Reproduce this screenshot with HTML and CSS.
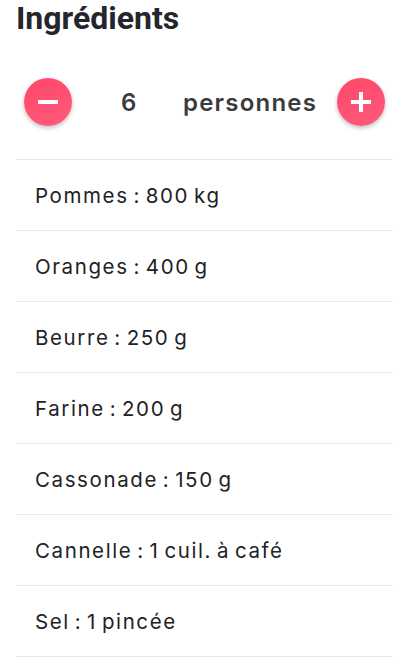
FILE: index.html
```html
<!DOCTYPE html>
<html lang="fr">
<head>
<meta charset="utf-8">
<link rel="stylesheet" href="styles.css">
</head>
<body>
<div class="page">
  <h1 class="title">Ingrédients</h1>
  <div class="counter">
    <button class="round" aria-label="moins">
      <svg width="48" height="48" viewBox="0 0 48 48"><rect x="14" y="22" width="20" height="4" fill="#fff"/></svg>
    </button>
    <span class="num">6</span>
    <span class="unit">personnes</span>
    <button class="round" aria-label="plus">
      <svg width="48" height="48" viewBox="0 0 48 48"><rect x="14" y="22" width="20" height="4" fill="#fff"/><rect x="22" y="14" width="4" height="20" fill="#fff"/></svg>
    </button>
  </div>
  <ul class="list">
    <li>Pommes : 800 kg</li>
    <li>Oranges : 400 g</li>
    <li>Beurre : 250 g</li>
    <li>Farine : 200 g</li>
    <li>Cassonade : 150 g</li>
    <li>Cannelle : 1 cuil. à café</li>
    <li>Sel : 1 pincée</li>
  </ul>
</div>
</body>
</html>
```
FILE: styles.css
```css
* { box-sizing: border-box; }
html, body { margin: 0; padding: 0; background: #fff; }
.page { padding: 0 23px 0 16px; }
.title {
  margin: 0;
  padding-top: 0;
  font-family: Roboto, "Liberation Sans", sans-serif;
  font-weight: 700;
  font-size: 32px;
  line-height: 36px;
  color: #23262d;
}
.counter {
  display: flex;
  align-items: center;
  padding: 42px 8px 33px 8px;
  font-family: "Inter", "Noto Sans", sans-serif;
  font-weight: 600;
  font-size: 24px;
  color: #3b3b3f;
}
.round {
  width: 48px;
  height: 48px;
  border: none;
  padding: 0;
  border-radius: 50%;
  background: linear-gradient(160deg, #ff4768, #ff5a7c);
  box-shadow: 0 2px 4px rgba(0,0,0,0.25);
  display: flex;
  align-items: center;
  justify-content: center;
}
.num { margin-left: 49px; width: 14px; }
.unit { margin-left: 48px; margin-right: auto; letter-spacing: 1.2px; }
.list {
  list-style: none;
  margin: 0;
  padding: 0;
  border-top: 1px solid #e8e9f0;
}
.list li {
  height: 71px;
  display: flex;
  align-items: center;
  padding-left: 19px;
  border-bottom: 1px solid #e8e9f0;
  font-family: "Inter", "Noto Sans", sans-serif;
  font-size: 20.5px;
  letter-spacing: 1.6px;
  word-spacing: -2.5px;
  color: #222226;
}
```
